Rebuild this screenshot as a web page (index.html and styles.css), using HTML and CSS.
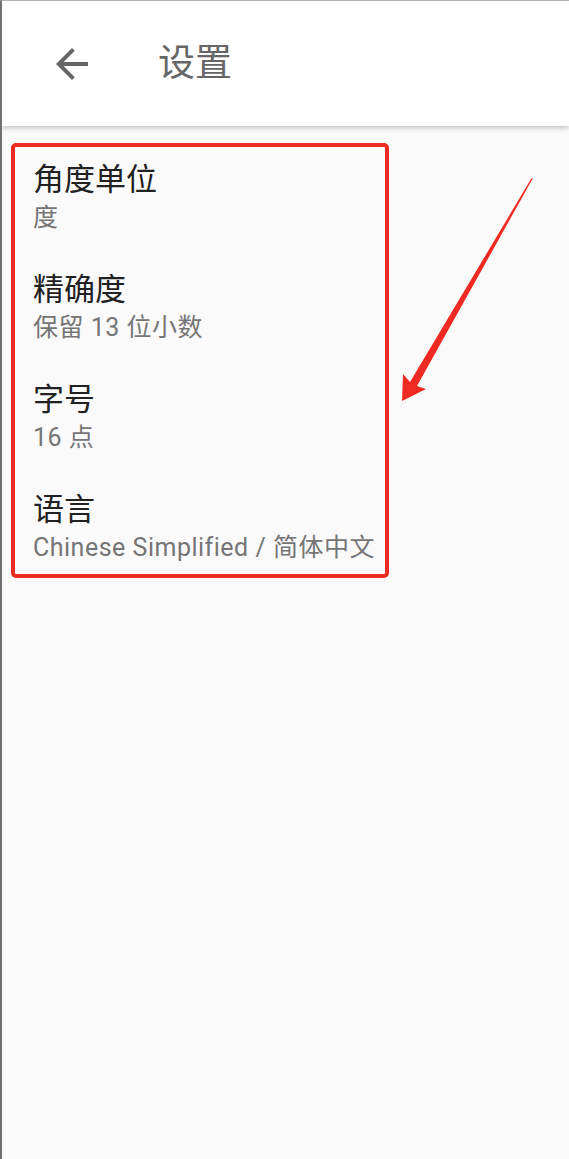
FILE: index.html
```html
<!DOCTYPE html>
<html lang="zh-CN">
<head>
<meta charset="utf-8">
<title>设置</title>
<link rel="stylesheet" href="styles.css">
</head>
<body>
<div class="screen">
  <header class="appbar">
    <svg class="back" viewBox="0 0 24 24" width="48" height="48" aria-hidden="true">
      <path d="M20 11H7.83l5.59-5.59L12 4l-8 8 8 8 1.41-1.41L7.83 13H20v-2z"/>
    </svg>
    <h1 class="title">设置</h1>
  </header>
  <main class="content">
    <ul class="prefs">
      <li class="pref"><div class="pref-title">角度单位</div><div class="pref-sub">度</div></li>
      <li class="pref"><div class="pref-title">精确度</div><div class="pref-sub">保留 13 位小数</div></li>
      <li class="pref"><div class="pref-title">字号</div><div class="pref-sub">16 点</div></li>
      <li class="pref"><div class="pref-title">语言</div><div class="pref-sub">Chinese Simplified / 简体中文</div></li>
    </ul>
    <svg class="pointer" viewBox="0 0 569 1159" width="569" height="1159" aria-hidden="true">
      <polygon points="533,178 417,386 426,389 402,401 403,374 410,382 531,179"/>
    </svg>
  </main>
</div>
</body>
</html>
```
FILE: styles.css
```css
html, body {
  margin: 0;
  padding: 0;
}
body {
  background: #fafafb;
  font-family: Roboto, "Noto Sans CJK SC", sans-serif;
}
.screen {
  position: relative;
  border-top: 1px solid #b4b4b4;
  border-left: 2px solid #707070;
  box-sizing: border-box;
  height: 1159px;
  overflow: hidden;
}
.appbar {
  height: 125px;
  background: #ffffff;
  display: flex;
  align-items: center;
  box-shadow: 0 2px 5px rgba(0, 0, 0, 0.22);
  position: relative;
  z-index: 1;
}
.back {
  margin-left: 46px;
  fill: #666666;
  flex: none;
}
.title {
  margin: 0 0 0 62px;
  font-family: Roboto, "Noto Sans CJK SC", sans-serif;
  font-weight: 400;
  font-size: 37px;
  line-height: 44px;
  color: #666666;
}
.content {
  padding: 17px 0 0 9px;
}
.prefs {
  list-style: none;
  margin: 0;
  padding: 0 0 0 18px;
  box-sizing: border-box;
  width: 378px;
  border: 4px solid #ec2b22;
  border-radius: 5px;
}
.pref {
  padding: 14px 0 23px 0;
}
.pref:last-child {
  padding-bottom: 10px;
}
.pref-title {
  font-size: 31px;
  line-height: 38px;
  color: #212121;
}
.pref-sub {
  margin-top: 3px;
  font-size: 25px;
  letter-spacing: 0.5px;
  line-height: 32px;
  color: #757575;
  white-space: nowrap;
}
.pointer {
  position: absolute;
  left: -2px;
  top: -1px;
  fill: #ee2a22;
  pointer-events: none;
}
```
